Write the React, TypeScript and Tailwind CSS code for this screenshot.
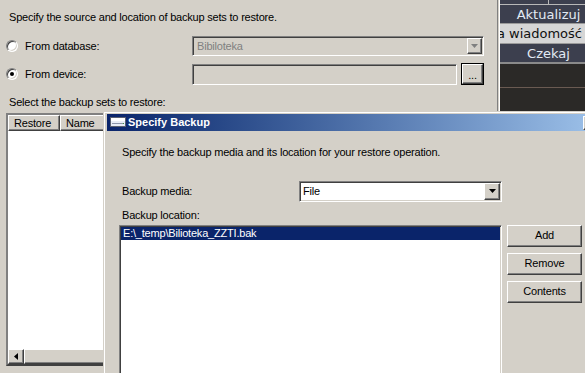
import React from "react";

// classic 3D edges
const sunken =
  "border border-t-[#808080] border-l-[#808080] border-r-white border-b-white shadow-[inset_1px_1px_0_#404040,inset_-1px_-1px_0_#d4d0c8]";
const raised =
  "border border-t-white border-l-white border-r-[#404040] border-b-[#404040] shadow-[inset_-1px_-1px_0_#808080]";

const Radio = ({ checked }: { checked?: boolean }) => (
  <div className={`w-[12px] h-[12px] rounded-full bg-white flex items-center justify-center ${sunken}`}>
    {checked && <div className="w-[4px] h-[4px] rounded-full bg-black" />}
  </div>
);

const DownArrow = ({ color = "#000" }: { color?: string }) => (
  <svg width="7" height="4" viewBox="0 0 7 4">
    <path d="M0 0h7L3.5 4z" fill={color} />
  </svg>
);

const DriveIcon = () => (
  <svg width="16" height="10" viewBox="0 0 16 10">
    <rect x="0.5" y="0.5" width="15" height="9" fill="#e8ecf4" stroke="#5a6070" />
    <rect x="1" y="1" width="14" height="3" fill="#ffffff" />
    <rect x="2" y="6" width="11" height="1" fill="#8c94a8" />
    <rect x="13" y="6" width="1" height="1" fill="#3c9a3c" />
  </svg>
);

export default function App() {
  return (
    <div className="relative w-[585px] h-[373px] overflow-hidden bg-[#d4d0c8] text-[11px] tracking-[-0.2px] text-black font-['Liberation_Sans',Arial,sans-serif]">
      {/* main restore window */}
      <div className="flex h-full">
        <div className="w-[497px] shrink-0 flex flex-col">
          <p className="pl-[9px] pt-[11px] leading-[13px]">Specify the source and location of backup sets to restore.</p>

          <div className="mt-[12px] h-[20px] flex items-center">
            <div className="w-[192px] flex items-center pl-[6px] gap-[7px]">
              <Radio />
              <span>From database:</span>
            </div>
            <div className={`w-[292px] h-[20px] flex items-center justify-between pl-[4px] pr-[1px] bg-[#d4d0c8] ${sunken}`}>
              <span className="text-[#808080]">Bibiloteka</span>
              <div className={`w-[15px] h-[16px] flex items-center justify-center bg-[#d4d0c8] ${raised}`}>
                <DownArrow color="#808080" />
              </div>
            </div>
          </div>

          <div className="mt-[7px] h-[22px] flex items-center">
            <div className="w-[192px] flex items-center pl-[6px] gap-[7px]">
              <Radio checked />
              <span>From device:</span>
            </div>
            <div className={`w-[265px] h-[21px] bg-[#d4d0c8] ${sunken}`} />
            <div className="ml-[4px] w-[23px] h-[22px] border border-black">
              <div className={`w-full h-full flex items-end justify-center pb-[3px] leading-[10px] ${raised}`}>...</div>
            </div>
          </div>

          <p className="pl-[9px] mt-[11px] leading-[13px]">Select the backup sets to restore:</p>

          <div className="ml-[6px] mt-[4px] w-[480px] h-[253px] flex flex-col bg-white border-2 border-t-[#808080] border-l-[#808080] border-b-[#404040] border-r-white">
            <div className="flex h-[16px]">
              <div className={`w-[52px] pl-[5px] flex items-center bg-[#d4d0c8] ${raised}`}>Restore</div>
              <div className={`w-[120px] pl-[5px] flex items-center bg-[#d4d0c8] ${raised}`}>Name</div>
            </div>
            <div className="flex-1" />
            <div className="h-[15px] flex bg-[#d4d0c8]">
              <div className={`w-[16px] flex items-center justify-center ${raised}`}>
                <svg width="4" height="7" viewBox="0 0 4 7">
                  <path d="M4 0v7L0 3.5z" fill="#000" />
                </svg>
              </div>
              <div className={`flex-1 ${raised}`} />
            </div>
          </div>
        </div>

        <div className="w-[3px] shrink-0 border-l border-l-[#808080] border-r border-r-white" />

        {/* dark side panel */}
        <div className="w-[97px] shrink-0 flex flex-col bg-[#2b2927] font-['DejaVu_Sans',Verdana,sans-serif] text-[13px] tracking-normal leading-[15px]">
          <div className="h-[5px] flex bg-[#3c3f4e] border-b border-b-[#b8b8b8]">
            <div className="w-[49px] border-r border-r-[#b8b8b8]" />
          </div>
          <div className="h-[19px] flex items-center justify-center bg-[#3c3f4e] text-[#e2eaf4] border-b border-b-[#9a9a9a]">
            Aktualizuj
          </div>
          <div className="h-[20px] flex items-center justify-end overflow-hidden whitespace-nowrap pr-[15px] bg-[#d6d6d6] text-[#101010] border-b border-b-[#9a9a9a]">
            <span className="shrink-0">Nowa wiadomość</span>
          </div>
          <div className="h-[20px] flex items-center justify-center bg-[#3c3f4e] text-[#e2eaf4] border-b-2 border-b-[#8a8a8a]">
            Czekaj
          </div>
          <div className="h-[24px] border-b border-b-[#6a5a52]" />
          <div className="flex-1" />
        </div>
      </div>

      {/* Specify Backup dialog */}
      <div className="absolute left-[103px] top-[111px] w-[520px] h-[300px] border-l border-t border-[#d4d0c8]">
        <div className="w-full h-full border-l border-t border-white bg-[#d4d0c8] pl-[2px] pt-[1px] flex flex-col">
          <div className="relative h-[18px] flex items-center gap-[2px] pl-[3px] bg-linear-to-r from-[#0a246a] to-[#a6caf0]">
            <DriveIcon />
            <span className="text-white font-bold tracking-normal">Specify Backup</span>
            <div className={`absolute left-[476px] top-[2px] w-[16px] h-[14px] bg-[#d4d0c8] ${raised}`} />
          </div>

          <div className="flex flex-col pl-[12px]">
            <p className="pl-[3px] mt-[15px] leading-[13px]">
              Specify the backup media and its location for your restore operation.
            </p>

            <div className="mt-[22px] h-[21px] flex items-center">
              <span className="w-[180px] pl-[3px]">Backup media:</span>
              <div className={`w-[203px] h-[21px] flex items-center justify-between pl-[3px] pr-[1px] bg-white ${sunken}`}>
                <span>File</span>
                <div className={`w-[16px] h-[17px] flex items-center justify-center bg-[#d4d0c8] ${raised}`}>
                  <DownArrow />
                </div>
              </div>
            </div>

            <p className="pl-[3px] mt-[7px] leading-[13px]">Backup location:</p>

            <div className="mt-[3px] flex gap-[5px]">
              <div className={`w-[383px] h-[200px] bg-white p-[1px] ${sunken}`}>
                <div className="h-[13px] flex items-center pl-[2px] bg-[#0a246a] text-white leading-[13px]">
                  E:\_temp\Bilioteka_ZZTI.bak
                </div>
              </div>
              <div className="flex flex-col gap-[6px]">
                <button className={`w-[75px] h-[22px] flex items-center justify-center bg-[#d4d0c8] ${raised}`}>Add</button>
                <button className={`w-[75px] h-[22px] flex items-center justify-center bg-[#d4d0c8] ${raised}`}>Remove</button>
                <button className={`w-[75px] h-[22px] flex items-center justify-center bg-[#d4d0c8] ${raised}`}>Contents</button>
              </div>
            </div>
          </div>
        </div>
      </div>
    </div>
  );
}
